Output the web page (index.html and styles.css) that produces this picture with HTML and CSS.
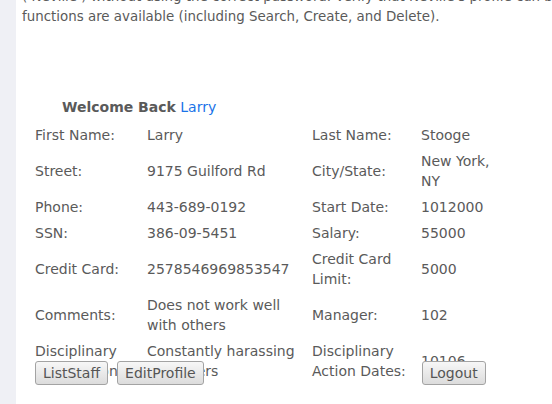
FILE: index.html
```html
<!DOCTYPE html>
<html>
<head>
<meta charset="utf-8">
<link rel="stylesheet" href="styles.css">
</head>
<body>
<div class="page">
  <div class="sidebar"></div>
  <main class="main">
    <p class="intro">( Neville ) without using the correct password. Verify that Neville's profile can be viewed and that all functions are available (including Search, Create, and Delete).</p>
    <div class="profile">
      <div class="welcome"><b>Welcome Back</b> <span class="user">Larry</span></div>
      <table class="info">
        <colgroup><col class="c1"><col class="c2"><col class="c3"><col class="c4"></colgroup>
        <tr><td>First Name:</td><td>Larry</td><td>Last Name:</td><td>Stooge</td></tr>
        <tr><td>Street:</td><td>9175 Guilford Rd</td><td>City/State:</td><td>New York, NY</td></tr>
        <tr><td>Phone:</td><td>443-689-0192</td><td>Start Date:</td><td>1012000</td></tr>
        <tr><td>SSN:</td><td>386-09-5451</td><td>Salary:</td><td>55000</td></tr>
        <tr><td>Credit Card:</td><td>2578546969853547</td><td>Credit Card Limit:</td><td>5000</td></tr>
        <tr><td>Comments:</td><td>Does not work well with others</td><td>Manager:</td><td>102</td></tr>
        <tr><td>Disciplinary Explanation:</td><td>Constantly harassing coworkers</td><td>Disciplinary Action Dates:</td><td>10106</td></tr>
      </table>
    </div>
    <div class="actions">
      <button class="btn">ListStaff</button>
      <button class="btn">EditProfile</button>
      <button class="btn logout">Logout</button>
    </div>
  </main>
</div>
</body>
</html>
```
FILE: styles.css
```css
html, body {
  margin: 0;
  padding: 0;
  background: #ffffff;
  height: 100%;
  overflow: hidden;
}
body {
  font-family: "DejaVu Sans", Verdana, sans-serif;
  color: #5a5a5a;
}
.page {
  display: flex;
  min-height: 404px;
}
.sidebar {
  width: 16px;
  flex: none;
  background: #eff0f5;
}
.main {
  flex: 1;
  min-width: 0;
  padding-left: 6px;
  overflow: hidden;
}
.intro {
  margin: -13px 0 0 0;
  width: 730px;
  font-size: 13.4px;
  line-height: 20px;
}
.profile {
  height: 264px;
  margin-top: 70px;
}
.welcome {
  font-size: 14px;
  line-height: 20px;
  padding-left: 40px;
  color: #5a5a5a;
}
.welcome b {
  font-weight: bold;
}
.user {
  color: #1a73e8;
}
.info {
  margin-left: 10px;
  margin-top: 4px;
  border-collapse: separate;
  border-spacing: 0 2px;
  table-layout: fixed;
  font-size: 14px;
  line-height: 20px;
  width: 466px;
}
.c1 { width: 112px; }
.c2 { width: 165px; }
.c3 { width: 109px; }
.c4 { width: 80px; }
.info td {
  padding: 2px 0 2px 3px;
  vertical-align: middle;
}
.actions {
  display: flex;
  margin-left: 13px;
  gap: 9px;
}
.btn {
  font-family: "DejaVu Sans", Verdana, sans-serif;
  font-size: 14px;
  line-height: 17px;
  color: #555;
  padding: 3px 7px 2px 7px;
  border: 1px solid #a3a3a3;
  border-radius: 3px;
  background: linear-gradient(#f7f7f7, #dcdcdc);
}
.logout {
  margin-left: 209px;
}
```
